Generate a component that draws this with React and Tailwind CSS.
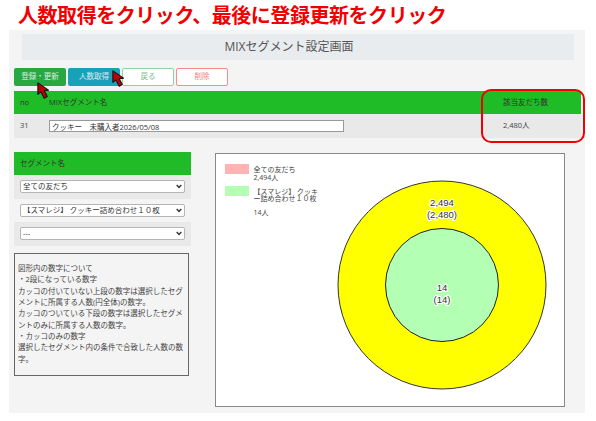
const FONT = "font-['Open_Sans','Noto_Sans_CJK_JP',sans-serif]";

function Cursor({ className }) {
  return (
    <svg className={className} width="12" height="17" viewBox="0 0 14 20">
      <path
        d="M1 1 L1 14.5 L4.6 11.6 L8.4 19 L12 17 L8.4 10.2 L13.5 9.6 Z"
        fill="#c00000"
        stroke="#111"
        strokeWidth="1.3"
        strokeLinejoin="round"
      />
    </svg>
  );
}

function SegmentSelect({ label, bg }) {
  return (
    <div className={`h-[23.5px] flex items-center px-[6px] ${bg}`}>
      <div className="relative w-[165px] h-[13px]">
        <select
          defaultValue={label}
          className="block w-full h-full appearance-none bg-white border border-[#b5b5b5] rounded-[2px] text-[7.5px] leading-none text-[#333] pl-[2px]"
        >
          <option>{label}</option>
        </select>
        <svg className="absolute right-[3px] top-[4px]" width="6" height="5" viewBox="0 0 6 5">
          <path d="M0.7 1 L3 3.5 L5.3 1" fill="none" stroke="#333" strokeWidth="1.4" />
        </svg>
      </div>
    </div>
  );
}

export default function App() {
  return (
    <div className={`${FONT} relative w-[596px] h-[421px] overflow-hidden bg-white text-[#444]`}>
      <h1 className="h-[30px] pl-[18px] pt-[1px] text-[20px] leading-[27px] font-bold text-[#f00000] font-['Noto_Sans_CJK_JP',sans-serif] tracking-[-0.45px]">
        人数取得をクリック、最後に登録更新をクリック
      </h1>

      <div className="ml-[9px] w-[576px] h-[383px] bg-[#f4f4f4] pt-[4px] pl-[5px]">
        <div className="ml-[8px] w-[552px] h-[26px] bg-[#e9ecef] flex items-center justify-center pr-[18px] text-[12px] text-[#555]">
          MIXセグメント設定画面
        </div>

        <div className="mt-[8px] flex gap-[2px] h-[18px] text-[7.5px]">
          <button className="w-[52px] rounded-[2px] bg-[#28a745] text-white/80">登録・更新</button>
          <button className="w-[52px] rounded-[2px] bg-[#17a2b8] text-white/80">人数取得</button>
          <button className="w-[52px] rounded-[2px] bg-white border border-[#8fd3a0] text-[#7cc08d]">戻る</button>
          <button className="w-[52px] rounded-[2px] bg-white border border-[#f58a8f] text-[#ef7b82]">削除</button>
        </div>

        <div className="mt-[5px] w-[567px] text-[7.5px]">
          <div className="h-[23px] bg-[#1fbc27] flex items-center text-[#333]">
            <span className="w-[35px] pl-[6px]">no</span>
            <span className="w-[433px]">MIXセグメント名</span>
            <span className="pl-[21px]">該当友だち数</span>
          </div>
          <div className="h-[24px] bg-[#e9e9e9] flex items-center">
            <span className="w-[35px] pl-[6px]">31</span>
            <input
              readOnly
              value="クッキー　未購入者2026/05/08"
              className="w-[295px] h-[12px] bg-white border border-[#999] px-[2px] text-[7.5px] leading-none text-[#333]"
            />
            <span className="ml-[138px] pl-[21px]">2,480人</span>
          </div>
        </div>

        <div className="mt-[14px] flex items-start">
          <div className="w-[177px] shrink-0">
            <div className="h-[23px] bg-[#1fbc27] flex items-center pl-[6px] text-[7.5px] text-[#333]">セグメント名</div>
            <SegmentSelect label="全ての友だち" bg="bg-[#e9e9e9]" />
            <SegmentSelect label="【スマレジ】 クッキー詰め合わせ１０枚" bg="bg-[#f4f4f4]" />
            <SegmentSelect label="---" bg="bg-[#e9e9e9]" />
            <div className="mt-[7.5px] w-[175px] h-[123px] border border-[#666] pt-[9px] pl-[3px] pr-[3px] text-[7.5px] leading-[11.35px] text-[#444]">
              図形内の数字について
              <br />
              ・2段になっている数字
              <br />
              カッコの付いていない上段の数字は選択したセグメントに所属する人数(円全体)の数字。
              <br />
              カッコのついている下段の数字は選択したセグメントのみに所属する人数の数字。
              <br />
              ・カッコのみの数字
              <br />
              選択したセグメント内の条件で合致した人数の数字。
            </div>
          </div>

          <div className="ml-[24px] mt-[1px] w-[350px] h-[254px] bg-white border border-[#888] flex">
            <div className="w-[100px] pl-[9px] pt-[10px] text-[7px] leading-[7.5px] text-[#444] shrink-0">
              <div className="flex gap-[5px]">
                <div className="w-[23.5px] h-[10px] bg-[#ffb3b3] shrink-0" />
                <div className="pt-[2px]">
                  全ての友だち
                  <br />
                  2,494人
                </div>
              </div>
              <div className="mt-[5px] flex gap-[5px]">
                <div className="w-[23.5px] h-[10px] bg-[#b3ffb3] shrink-0" />
                <div className="pt-[1.5px] whitespace-nowrap">
                  【スマレジ】 クッキ
                  <br />
                  ー詰め合わせ１０枚
                  <div className="mt-[6px]">14人</div>
                </div>
              </div>
            </div>
            <svg width="248" height="252" viewBox="0 0 248 252" className="shrink-0">
              <circle cx="126" cy="131" r="104" fill="#ffff00" stroke="#333" strokeWidth="1" />
              <circle cx="126" cy="131" r="56.5" fill="#b3ffb3" stroke="#222" strokeWidth="1" />
              <g
                fontSize="9.5"
                fontFamily="'Liberation Sans', Arial, sans-serif"
                textAnchor="middle"
                fill="#333"
                stroke="#fff"
                strokeWidth="2"
                paintOrder="stroke"
              >
                <text x="126" y="51.5">2,494</text>
                <text x="126" y="63.5">(2,480)</text>
                <text x="126" y="136.5">14</text>
                <text x="126" y="148.5">(14)</text>
              </g>
            </svg>
          </div>
        </div>
      </div>

      {/* annotations on top of the screenshot */}
      <Cursor className="absolute left-[37px] top-[82px]" />
      <Cursor className="absolute left-[112px] top-[70px]" />
      <div className="absolute left-[481px] top-[89px] w-[104px] h-[54px] border-2 border-[#f00000] rounded-[10px]" />
    </div>
  );
}
